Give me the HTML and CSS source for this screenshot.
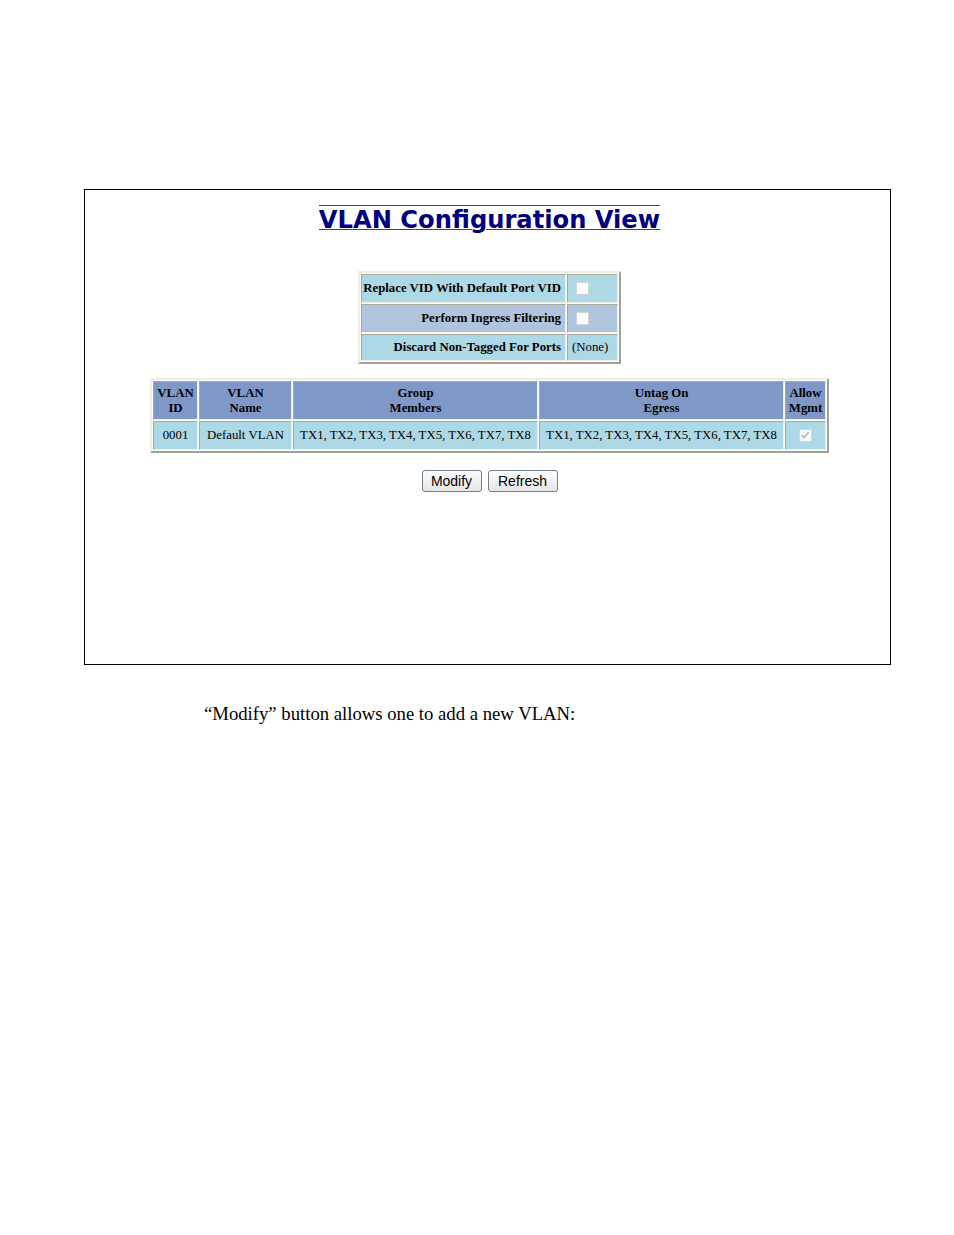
FILE: index.html
```html
<!DOCTYPE html>
<html>
<head>
<meta charset="utf-8">
<title>VLAN Configuration View</title>
<link rel="stylesheet" href="styles.css">
</head>
<body>
<div class="frame">
  <h1 class="title">VLAN Configuration View</h1>
  <table class="opts">
    <tr class="r-light">
      <td class="lbl">Replace VID With Default Port VID</td>
      <td class="val"><span class="cb"></span></td>
    </tr>
    <tr class="r-steel">
      <td class="lbl">Perform Ingress Filtering</td>
      <td class="val"><span class="cb"></span></td>
    </tr>
    <tr class="r-light">
      <td class="lbl">Discard Non-Tagged For Ports</td>
      <td class="val">(None)</td>
    </tr>
  </table>
  <table class="vlans">
    <tr class="head">
      <th class="c-id">VLAN<br>ID</th>
      <th class="c-name">VLAN<br>Name</th>
      <th class="c-grp">Group<br>Members</th>
      <th class="c-untag">Untag On<br>Egress</th>
      <th class="c-mgmt">Allow<br>Mgmt</th>
    </tr>
    <tr class="r-light">
      <td>0001</td>
      <td>Default VLAN</td>
      <td>TX1, TX2, TX3, TX4, TX5, TX6, TX7, TX8</td>
      <td>TX1, TX2, TX3, TX4, TX5, TX6, TX7, TX8</td>
      <td><span class="cb cb-dis"><svg viewBox="0 0 12 12" width="12" height="12"><path d="M2.6 6.2 L5 8.6 L9.6 3.2" fill="none" stroke="#b8b8b8" stroke-width="1.6"/></svg></span></td>
    </tr>
  </table>
  <div class="buttons">
    <button class="btn">Modify</button>
    <button class="btn">Refresh</button>
  </div>
</div>
<p class="caption">“Modify” button allows one to add a new VLAN:</p>
</body>
</html>
```

FILE: styles.css
```css
html, body {
  margin: 0;
  padding: 0;
  background: #ffffff;
}

body {
  font-family: "Liberation Serif", "Times New Roman", serif;
  color: #000000;
}

.frame {
  box-sizing: border-box;
  margin: 189px 0 0 84px;
  width: 807px;
  height: 476px;
  border: 1px solid #000000;
  display: flex;
  flex-direction: column;
  align-items: center;
  padding-left: 4px;
}

.title {
  margin: 16px 0 0 0;
  font-family: "DejaVu Sans", Verdana, sans-serif;
  font-weight: bold;
  font-size: 24.2px;
  line-height: 28px;
  color: #000080;
  text-decoration: underline overline;
  text-decoration-color: #3a3aa0;
  text-decoration-thickness: 1px;
}

table {
  border-collapse: separate;
  border-spacing: 1px;
  border-style: solid;
  border-width: 2px;
  border-color: #efeee4 #a2a196 #a2a196 #efeee4;
  font-size: 12.8px;
}

td, th {
  border-style: solid;
  border-width: 1px;
  border-color: #a9a89c #f2f1e8 #f2f1e8 #a9a89c;
  line-height: 15px;
  white-space: nowrap;
}

.r-light td { background: #add8e6; }
.r-steel td { background: #b0c4de; }

.opts {
  margin-top: 37px;
  font-weight: bold;
}

.opts td {
  padding: 5px 4px;
}

.opts td.lbl {
  width: 199px;
  padding-left: 0;
  text-align: right;
}

.opts td.val {
  width: 41px;
  text-align: left;
  font-weight: normal;
}

.cb {
  display: block;
  box-sizing: border-box;
  width: 13px;
  height: 13px;
  margin: 3px 0 3px 4px;
  background: #ffffff;
  border: 1px solid #d0d4d8;
}

.opts td .cb {
  margin: 2px 0 2px 4px;
}

.cb svg {
  display: block;
  margin: -1px 0 0 -1px;
}

.cb-dis {
  margin: 3px auto;
  background: #f6f7f7;
  border-color: #d6d8d8;
}

.vlans {
  margin-top: 14px;
}

.vlans th {
  background: #7f98c8;
  font-weight: bold;
  padding: 4px 2px 3px 2px;
  text-align: center;
}

.vlans td {
  padding: 4px 2px;
  text-align: center;
}

.c-id { width: 39px; }
.c-name { width: 87px; }
.c-grp { width: 239px; }
.c-untag { width: 239px; }
.c-mgmt { width: 35px; }

.buttons {
  margin-top: 17px;
  display: flex;
  gap: 6px;
}

.btn {
  box-sizing: border-box;
  height: 22px;
  padding: 0 8px;
  font-family: "Liberation Sans", Arial, sans-serif;
  font-size: 14px;
  color: #000000;
  background: linear-gradient(#fdfdfd, #e6e6e6);
  border: 1px solid #6f7e8c;
  border-radius: 3px;
}

.btn:first-child { width: 60px; }
.btn:last-child { width: 70px; }

.caption {
  margin: 38px 0 0 204px;
  font-size: 18.7px;
  line-height: 22px;
}
```
